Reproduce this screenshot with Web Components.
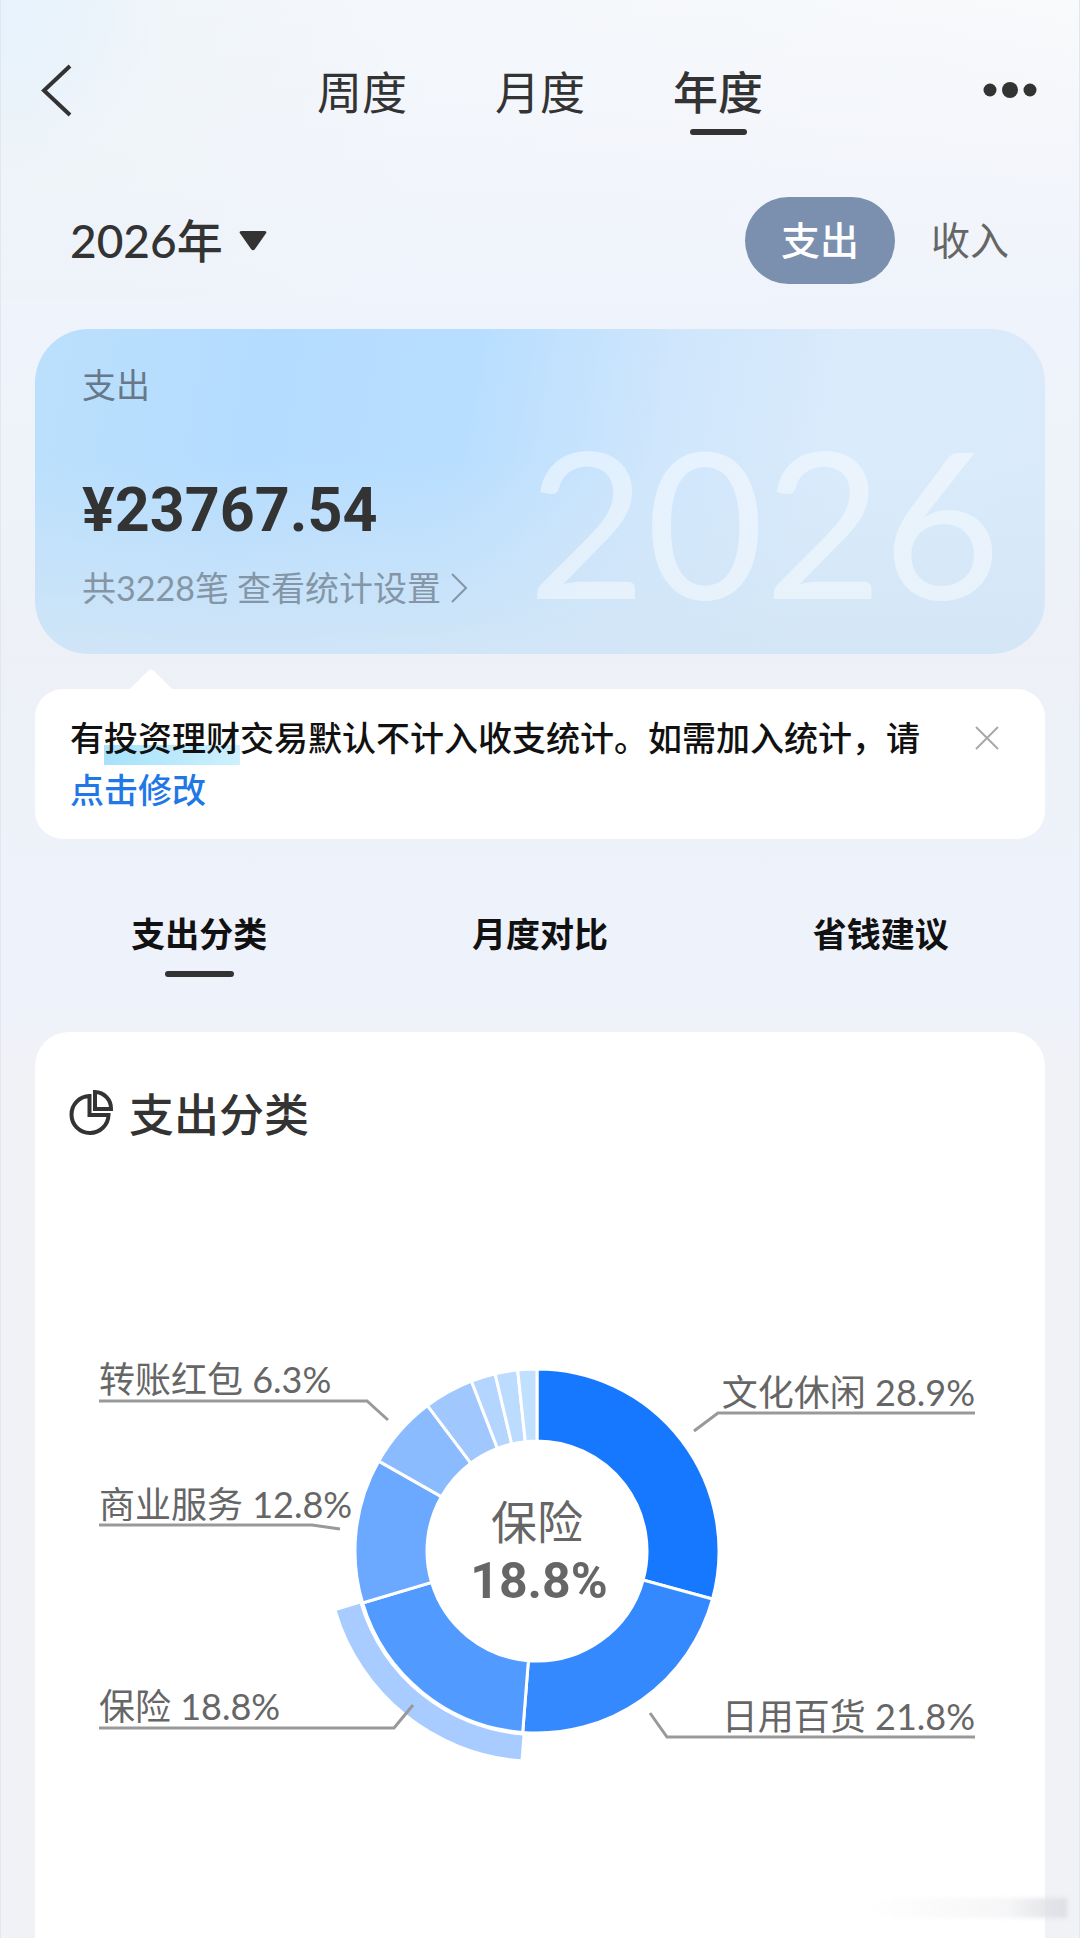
<!DOCTYPE html>
<html lang="zh-CN">
<head>
<meta charset="UTF-8">
<meta name="viewport" content="width=device-width, initial-scale=1">
<title>年度账单</title>
<style>
    body{
        margin: 0;
        font-family: Lato, "Noto Sans CJK SC", sans-serif;
        color: #333;
        background-color: #f1f2f6;
    }
</style>
</head>
<body>
<report-page>
    <top-nav></top-nav>
    <period-bar></period-bar>
    <summary-card year="2026">
        <span slot="label">支出</span>
        <span slot="amount">¥23767.54</span>
        <span slot="count">共3228笔</span>
    </summary-card>
    <notice-tip>有<mark>投资理财</mark>交易默认不计入收支统计。如需加入统计，请<a href="#settings">点击修改</a></notice-tip>
    <section-tabs></section-tabs>
    <category-card>
        <span slot="title">支出分类</span>
        <ring-chart></ring-chart>
    </category-card>
</report-page>

<script>
//Página completa: fondo y columna principal
class ReportPage extends HTMLElement {
    constructor (){
        super();
        this.attachShadow({mode: "open"});
        this.render();
    }

    render (){
        this.shadowRoot.innerHTML =
        `
        <style>
            :host{
                display: flex;
                flex-direction: column;
                position: relative;
                box-sizing: border-box;
                min-height: 100vh;
                border-left: 1px solid #e0e6f2;
                border-right: 1px solid #e0e6f2;
                padding: 0 34px;
                background:
                    radial-gradient(circle at 0 0, #e6f2fd 0, rgba(230, 242, 253, 0) 180px),
                    linear-gradient(105deg, rgba(236, 243, 247, 0.8) 0, rgba(240, 244, 252, 0.4) 40%, rgba(249, 250, 252, 0) 100%) top / 100% 300px no-repeat,
                    linear-gradient(#f8fafb 0, #f4f6fb 150px, #eff3fb 300px, #edf1f7 660px, #eef2fb 1000px, #f1f2f6 1070px);
            }
            .smudge{
                position: absolute;
                right: 12px;
                bottom: 20px;
                width: 200px;
                height: 20px;
                background: linear-gradient(to right, rgba(224, 225, 230, 0), rgba(224, 225, 230, 0.3) 70%, #dedfe4);
                filter: blur(2px);
            }
        </style>
        <slot></slot>
        <div class="smudge"></div>
        `;
    }
}

//Barra superior
class TopNav extends HTMLElement {
    constructor (){
        super();
        this.attachShadow({mode: "open"});
        this.render();
    }

    render (){
        this.shadowRoot.innerHTML =
        `
        <style>
            :host{
                display: grid;
                grid-template-columns: 1fr auto 1fr;
                align-items: start;
                padding-top: 60px;
            }
            button{
                padding: 0;
                border: 0;
                background: none;
                font: inherit;
                color: inherit;
                cursor: pointer;
            }
            svg{
                display: block;
            }
            nav{
                display: flex;
                gap: 88px;
            }
            nav button{
                display: flex;
                flex-direction: column;
                align-items: center;
                gap: 3px;
                font-size: 45px;
                line-height: 66px;
            }
            nav button::after{
                content: "";
                width: 57px;
                height: 6px;
                border-radius: 3px;
            }
            nav button[aria-selected="true"]{
                font-weight: 500;
            }
            nav button[aria-selected="true"]::after{
                background-color: #333;
            }
            .more{
                justify-self: end;
            }
        </style>
        <button class="back" aria-label="返回">
            <svg width="44" height="60" viewBox="0 0 44 60" fill="none" stroke="#333" stroke-width="4"><path d="M35 6L9 30.500L35 55"/></svg>
        </button>
        <nav role="tablist">
            <button role="tab" aria-selected="false">周度</button>
            <button role="tab" aria-selected="false">月度</button>
            <button role="tab" aria-selected="true">年度</button>
        </nav>
        <button class="more" aria-label="更多">
            <svg width="64" height="60" viewBox="0 0 64 60" fill="#333"><circle cx="9" cy="30" r="6.500"/><circle cx="29" cy="30" r="8"/><circle cx="49" cy="30" r="6.500"/></svg>
        </button>
        `;
    }
}

//Año y tipo de movimiento
class PeriodBar extends HTMLElement {
    constructor (){
        super();
        this.attachShadow({mode: "open"});
        this.render();
    }

    render (){
        this.shadowRoot.innerHTML =
        `
        <style>
            :host{
                display: flex;
                justify-content: space-between;
                align-items: center;
                margin-top: 62px;
                padding-left: 35px;
            }
            label{
                display: flex;
                align-items: center;
                gap: 16px;
            }
            select{
                appearance: none;
                padding: 0;
                border: 0;
                background: none;
                font: inherit;
                font-size: 46px;
                font-weight: 500;
                line-height: 66px;
                color: inherit;
            }
            .kinds{
                display: flex;
            }
            .kinds button{
                padding: 0 36px;
                border: 0;
                border-radius: 44px;
                background: none;
                font: inherit;
                font-size: 39px;
                line-height: 87px;
                color: #666;
                cursor: pointer;
            }
            .kinds button[aria-pressed="true"]{
                background-color: #7a90ae;
                color: #fff;
                font-weight: 500;
            }
        </style>
        <label>
            <select aria-label="年份"><option>2026年</option></select>
            <svg width="28" height="20" viewBox="0 0 28 20"><path d="M3 0H25Q29 0 26.500 3L16 18Q14 20.500 12 18L1.500 3Q-1 0 3 0Z" fill="#333"/></svg>
        </label>
        <div class="kinds">
            <button aria-pressed="true">支出</button>
            <button aria-pressed="false">收入</button>
        </div>
        `;
    }
}

//Tarjeta azul con el total
class SummaryCard extends HTMLElement {
    constructor (){
        super();
        this.attachShadow({mode: "open"});
        this.render();
    }

    render (){
        this.shadowRoot.innerHTML =
        `
        <style>
            :host{
                display: block;
                position: relative;
                overflow: hidden;
                margin-top: 45px;
                padding: 31px 47px 41px;
                border-radius: 54px;
                background:
                    linear-gradient(rgba(211, 230, 246, 0) 40%, rgba(211, 230, 246, 0.5) 75%, rgba(211, 230, 246, 0.9) 100%),
                    linear-gradient(100deg, #bbe0fc 0, #b4dcff 22%, #b8deff 42%, #cfe6fc 60%, #daebfb 78%, #daeafb 100%);
            }
            .year{
                position: absolute;
                right: 44px;
                bottom: 24px;
                font-size: 204px;
                line-height: 220px;
                color: rgba(255, 255, 255, 0.45);
            }
            .label{
                font-size: 34px;
                line-height: 50px;
                color: #66788a;
            }
            .amount{
                margin-top: 60px;
                font-family: Roboto, sans-serif;
                font-size: 61px;
                font-weight: bold;
                line-height: 80px;
            }
            .detail{
                display: flex;
                align-items: center;
                gap: 8px;
                margin-top: 13px;
                font-size: 34px;
                line-height: 50px;
                color: #8496a6;
            }
            a{
                display: flex;
                align-items: center;
                gap: 9px;
                color: inherit;
                text-decoration: none;
            }
        </style>
        <div class="year">${this.getAttribute("year")}</div>
        <div class="label"><slot name="label"></slot></div>
        <div class="amount"><slot name="amount"></slot></div>
        <div class="detail">
            <slot name="count"></slot>
            <a href="#settings">查看统计设置
                <svg width="18" height="30" viewBox="0 0 18 30" fill="none" stroke="#8496a6" stroke-width="2"><path d="M2 1L16 15L2 29"/></svg>
            </a>
        </div>
        `;
    }
}

//Aviso con flecha
class NoticeTip extends HTMLElement {
    constructor (){
        super();
        this.attachShadow({mode: "open"});
        this.render();
    }

    render (){
        this.shadowRoot.innerHTML =
        `
        <style>
            :host{
                display: flex;
                position: relative;
                align-items: flex-start;
                gap: 24px;
                margin-top: 35px;
                padding: 23px 36px 23px 35px;
                border-radius: 28px;
                background-color: #fff;
                font-size: 34px;
                font-weight: 500;
                line-height: 52px;
                color: #111;
            }
            .arrow{
                position: absolute;
                left: 94px;
                top: -20px;
            }
            p{
                flex: 1;
                margin: 0;
            }
            ::slotted(mark){
                padding-bottom: 7px;
                color: inherit;
                background: linear-gradient(to right, #a6e2fa, #cdf1fd) bottom / 100% 20px no-repeat;
            }
            ::slotted(a){
                display: block;
                color: #1f78e6;
                text-decoration: none;
            }
            button{
                height: 52px;
                padding: 0 8px;
                border: 0;
                background: none;
                cursor: pointer;
            }
            button svg{
                display: block;
            }
        </style>
        <svg class="arrow" width="44" height="21" viewBox="0 0 44 21"><path d="M0 21L19 2Q22 -1 25 2L44 21Z" fill="#fff"/></svg>
        <p><slot></slot></p>
        <button aria-label="关闭">
            <svg width="28" height="28" viewBox="0 0 28 28" stroke="#a8a8a8" stroke-width="2"><path d="M3 3L25 25M25 3L3 25"/></svg>
        </button>
        `;
    }
}

//Pestañas de sección
class SectionTabs extends HTMLElement {
    constructor (){
        super();
        this.attachShadow({mode: "open"});
        this.render();
    }

    render (){
        this.shadowRoot.innerHTML =
        `
        <style>
            :host{
                display: grid;
                grid-template-columns: repeat(3, 1fr);
                margin: 69px -6px 0;
            }
            button{
                display: flex;
                flex-direction: column;
                align-items: center;
                gap: 11px;
                padding: 0;
                border: 0;
                background: none;
                font: inherit;
                font-size: 34px;
                font-weight: bold;
                line-height: 52px;
                color: #111;
                cursor: pointer;
            }
            button::after{
                content: "";
                width: 69px;
                height: 6px;
                border-radius: 3px;
            }
            button[aria-selected="true"]::after{
                background-color: #333;
            }
        </style>
        <button role="tab" aria-selected="true">支出分类</button>
        <button role="tab" aria-selected="false">月度对比</button>
        <button role="tab" aria-selected="false">省钱建议</button>
        `;
    }
}

//Tarjeta blanca de categorías
class CategoryCard extends HTMLElement {
    constructor (){
        super();
        this.attachShadow({mode: "open"});
        this.render();
    }

    render (){
        this.shadowRoot.innerHTML =
        `
        <style>
            :host{
                display: block;
                flex: 1;
                margin-top: 55px;
                padding-top: 53px;
                border-radius: 34px 34px 0 0;
                background-color: #fff;
            }
            h2{
                display: flex;
                align-items: center;
                gap: 14px;
                margin: 0;
                padding-left: 34px;
                font-size: 45px;
                font-weight: 500;
                line-height: 60px;
            }
        </style>
        <h2>
            <svg width="46" height="52" viewBox="0 0 46 52" fill="none" stroke="#333" stroke-width="4"><path d="M20.500 7A18.500 18.500 0 1 0 39.500 26H20.500Z"/><path d="M26 3V20H42A16.500 16.500 0 0 0 26 3Z"/></svg>
            <slot name="title"></slot>
        </h2>
        <slot></slot>
        `;
    }
}

//Gráfico de anillo
const slices = [
    //inicio, fin (grados desde arriba), color
    [0, 105.3, "#1677ff"],
    [105.3, 184.5, "#3589ff"],
    [184.5, 253.4, "#519aff"],
    [253.4, 299.6, "#6ba8ff"],
    [299.6, 323, "#8bbbff"],
    [323, 338.9, "#a0c8ff"],
    [338.9, 346.7, "#b4d5ff"],
    [346.7, 353.9, "#bbdbff"],
    [353.9, 360, "#c1e0ff"]
];

const labels = [
    {text: "转账红包 6.3%", x: 64, y: 248, anchor: "start", line: "64,256 332,256 353,275"},
    {text: "商业服务 12.8%", x: 64, y: 373, anchor: "start", line: "64,380 277,380 305,384"},
    {text: "保险 18.8%", x: 64, y: 575, anchor: "start", line: "64,583 359,583 378,560"},
    {text: "文化休闲 28.9%", x: 940, y: 261, anchor: "end", line: "940,268 683,268 659,286"},
    {text: "日用百货 21.8%", x: 940, y: 585, anchor: "end", line: "940,592 632,592 615,568"}
];

class RingChart extends HTMLElement {
    constructor (){
        super();
        this.attachShadow({mode: "open"});
        this.render();
    }

    point (angle, radius){
        const rad = angle * Math.PI / 180;
        return (502 + radius * Math.sin(rad)).toFixed(2) + " " + (406 - radius * Math.cos(rad)).toFixed(2);
    }

    arc (start, end, inner, outer){
        return `M${this.point(start, outer)}A${outer} ${outer} 0 0 1 ${this.point(end, outer)}` +
            `L${this.point(end, inner)}A${inner} ${inner} 0 0 0 ${this.point(start, inner)}Z`;
    }

    render (){
        this.shadowRoot.innerHTML =
        `
        <style>
            :host{
                display: block;
            }
            svg{
                display: block;
                width: 100%;
            }
            .slice{
                stroke: #fff;
                stroke-width: 3px;
            }
            .label{
                font-size: 36px;
                fill: #666;
            }
            .line{
                fill: none;
                stroke: #999;
                stroke-width: 3px;
            }
            .name{
                font-size: 46px;
                fill: #666;
            }
            .share{
                font-family: Roboto, sans-serif;
                font-size: 50px;
                font-weight: bold;
                fill: #666;
            }
        </style>
        <svg viewBox="0 0 1010 700">
            ${slices.map(([start, end, color]) => `<path class="slice" d="${this.arc(start, end, 110, 182)}" fill="${color}"/>`).join("")}
            <path d="${this.arc(184.5, 253.4, 185, 209)}" fill="#a8ccff"/>
            ${labels.map(l => `<polyline class="line" points="${l.line}"/><text class="label" x="${l.x}" y="${l.y}" text-anchor="${l.anchor}">${l.text}</text>`).join("")}
            <text class="name" x="502" y="394" text-anchor="middle">保险</text>
            <text class="share" x="504" y="453" text-anchor="middle">18.8%</text>
        </svg>
        `;
    }
}

customElements.define("report-page", ReportPage);
customElements.define("top-nav", TopNav);
customElements.define("period-bar", PeriodBar);
customElements.define("summary-card", SummaryCard);
customElements.define("notice-tip", NoticeTip);
customElements.define("section-tabs", SectionTabs);
customElements.define("category-card", CategoryCard);
customElements.define("ring-chart", RingChart);
</script>
</body>
</html>
